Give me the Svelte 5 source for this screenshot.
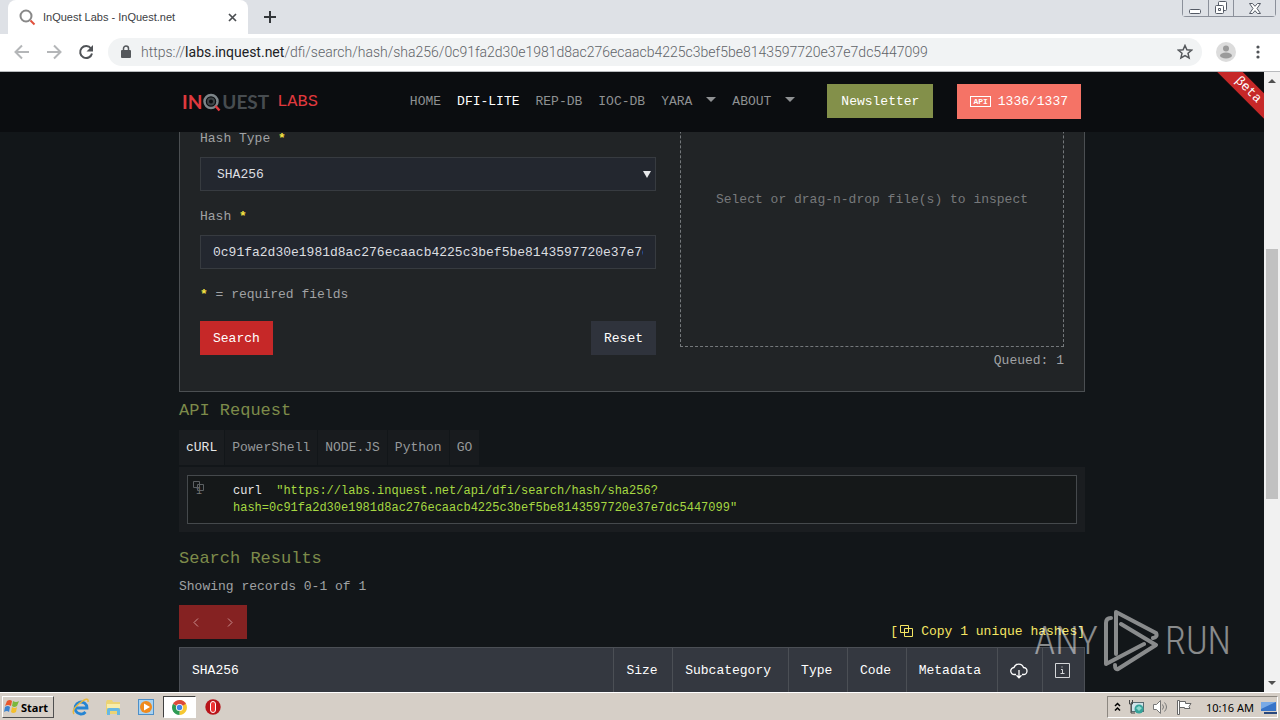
<script>
    const hash = "0c91fa2d30e1981d8ac276ecaacb4225c3bef5be8143597720e37e7dc5447099";

    const nav = [
        { name: "HOME" },
        { name: "DFI-LITE", active: true },
        { name: "REP-DB" },
        { name: "IOC-DB" },
        { name: "YARA", menu: true },
        { name: "ABOUT", menu: true },
    ];
    const languages = ["cURL", "PowerShell", "NODE.JS", "Python", "GO"];
    const columns = ["Size", "Subcategory", "Type", "Code", "Metadata"];

    let hashType = $state("SHA256");
    let hashValue = $state(hash);
    let language = $state("cURL");
</script>

<div class="screen">
    <div class="tabstrip">
        <div class="tab">
            <svg width="17" height="17" viewBox="0 0 17 17" fill="none">
                <circle cx="7" cy="7" r="5.5" stroke="#888" stroke-width="2" />
                <path d="M11.5 11.5l4 4" stroke="#e0503c" stroke-width="2" />
            </svg>
            <span class="tab-title">InQuest Labs - InQuest.net</span>
            <button class="plain" aria-label="Close tab">
                <svg width="9" height="9" viewBox="0 0 9 9"><path d="M1 1l7 7M8 1l-7 7" stroke="#4b4e52" stroke-width="1.7" /></svg>
            </button>
        </div>
        <button class="plain new-tab" aria-label="New tab">
            <svg width="12" height="12" viewBox="0 0 12 12"><path d="M6 0v12M0 6h12" stroke="#33363a" stroke-width="2" /></svg>
        </button>
        <div class="window-buttons">
            <button aria-label="Minimize"><svg width="13" height="12" viewBox="0 0 13 12"><rect x=".5" y="7.5" width="11" height="4" rx="1" fill="#fff" stroke="#555b66" /></svg></button>
            <button aria-label="Restore">
                <svg width="14" height="14" viewBox="0 0 14 14" fill="#fff" stroke="#555b66"><rect x="4.5" y=".5" width="8" height="9" rx="1" /><rect x="1.5" y="4.5" width="8" height="8" rx="1" /><path d="M4.5 7.5h2v2h-2z" /></svg>
            </button>
            <button aria-label="Close"><svg width="12" height="11" viewBox="0 0 12 11"><path d="M.5.5h3L6 3.3 8.5.5h3L8 5.5l3.5 5h-3L6 7.7l-2.5 2.8h-3L4 5.5z" fill="#fff" stroke="#555b66" /></svg></button>
        </div>
    </div>

    <div class="toolbar">
        <button class="plain" aria-label="Back">
            <svg width="16" height="16" viewBox="0 0 16 16" fill="none" stroke="#b4b6b8" stroke-width="2"><path d="M15 8H2M8 1.5L1.5 8 8 14.5" /></svg>
        </button>
        <button class="plain" aria-label="Forward">
            <svg width="16" height="16" viewBox="0 0 16 16" fill="none" stroke="#b4b6b8" stroke-width="2"><path d="M1 8h13M8 1.5L14.5 8 8 14.5" /></svg>
        </button>
        <button class="plain" aria-label="Reload">
            <svg width="16" height="16" viewBox="0 0 16 16"><path d="M13 4.5A6 6 0 1 0 14 9.5" fill="none" stroke="#505357" stroke-width="2" /><path d="M15 1v6.5H8.5z" fill="#505357" /></svg>
        </button>
        <div class="address">
            <svg width="10" height="13" viewBox="0 0 10 13"><rect y="5" width="10" height="8" rx="1" fill="#55585c" /><path d="M2.5 5V3.5a2.5 2.5 0 0 1 5 0V5" fill="none" stroke="#55585c" stroke-width="1.5" /></svg>
            <span class="url">https://<b>labs.inquest.net</b>/dfi/search/hash/sha256/{hash}</span>
            <button class="plain" aria-label="Bookmark">
                <svg width="16" height="16" viewBox="0 0 16 16"><path d="M8 1.5l1.9 4.3 4.7.4-3.6 3.1 1.1 4.6L8 11.5l-4.1 2.4L5 9.3 1.4 6.2l4.7-.4z" fill="none" stroke="#55585c" stroke-width="1.5" /></svg>
            </button>
        </div>
        <button class="plain avatar" aria-label="Profile">
            <svg width="20" height="20" viewBox="0 0 20 20"><circle cx="10" cy="10" r="10" fill="#dcdcdc" /><circle cx="10" cy="6.5" r="3" fill="#9b9b9b" /><ellipse cx="10" cy="13.5" rx="6" ry="3" fill="#9b9b9b" /></svg>
        </button>
        <button class="plain" aria-label="Menu">
            <svg width="4" height="14" viewBox="0 0 4 14" fill="#505357"><circle cx="2" cy="2" r="1.6" /><circle cx="2" cy="7" r="1.6" /><circle cx="2" cy="12" r="1.6" /></svg>
        </button>
    </div>

    <div class="viewport">
        <div class="page">
            <header>
                <div class="container bar">
                    <a class="logo" href="/" aria-label="InQuest Labs">
                        <span class="red">IN</span><svg width="20" height="19" viewBox="0 0 20 19" fill="none"><circle cx="9" cy="8.5" r="6.5" stroke="#7d8589" stroke-width="2.5" /><circle cx="9" cy="8.5" r="3" stroke="#3d4346" stroke-width="2" /><path d="M13.5 13l4 4.5" stroke="#e0393e" stroke-width="2.5" /></svg><span class="gray">UEST</span><span class="red labs">LABS</span>
                    </a>
                    <nav>
                        {#each nav as item}
                            <a href="/" class:active={item.active}>{item.name}{#if item.menu}<i></i>{/if}</a>
                        {/each}
                    </nav>
                    <button class="newsletter">Newsletter</button>
                    <button class="quota"><span>API</span>1336/1337</button>
                </div>
                <div class="ribbon">βeta</div>
            </header>

            <main class="container">
                <section class="card">
                    <form onsubmit={(e) => e.preventDefault()}>
                        <label for="hash-type">Hash Type <b>*</b></label>
                        <div class="select">
                            <select id="hash-type" bind:value={hashType}>
                                <option>SHA256</option>
                                <option>SHA1</option>
                                <option>MD5</option>
                            </select>
                        </div>
                        <label for="hash">Hash <b>*</b></label>
                        <input id="hash" type="text" bind:value={hashValue} />
                        <p><b>*</b> = required fields</p>
                        <div class="actions">
                            <button class="search">Search</button>
                            <button class="reset" type="reset">Reset</button>
                        </div>
                    </form>
                    <div class="upload">
                        <div class="dropzone">Select or drag-n-drop file(s) to inspect</div>
                        <p>Queued: 1</p>
                    </div>
                </section>

                <h2>API Request</h2>
                <div class="languages">
                    {#each languages as name}
                        <button class:active={language == name} onclick={() => (language = name)}>{name}</button>
                    {/each}
                </div>
                <div class="snippet">
                    <div class="code">
                        <span class="line-no">1</span>
                        <svg class="copy" width="11" height="11" viewBox="0 0 11 11" fill="none" stroke="#5c6063"><path d="M.5.5h6v6h-6zM4.5 3.5h6v6h-6z" /></svg>
                        <code><em>curl</em>{"  "}"https://labs.inquest.net/api/dfi/search/hash/sha256?<br />hash={hash}"</code>
                    </div>
                </div>

                <h2 class="results-title">Search Results</h2>
                <p class="showing">Showing records 0-1 of 1</p>
                <div class="results-bar">
                    <div class="pager">
                        <button aria-label="Previous"><svg width="6" height="9" viewBox="0 0 6 9"><path d="M5 .5l-4 4 4 4" /></svg></button>
                        <button aria-label="Next"><svg width="6" height="9" viewBox="0 0 6 9"><path d="M1 .5l4 4-4 4" /></svg></button>
                    </div>
                    <a class="copy-all" href="/">[<svg width="13" height="12" viewBox="0 0 13 12" fill="none" stroke="#f5e663"><path d="M.5.5h8v7h-8zM4.5 3.5h8v8h-8z" /></svg>Copy 1 unique hashes]</a>
                </div>
                <table>
                    <thead>
                        <tr>
                            <th class="wide">SHA256</th>
                            {#each columns as column}
                                <th>{column}</th>
                            {/each}
                            <th aria-label="Download">
                                <svg width="18" height="16" viewBox="0 0 18 16" fill="none" stroke="#fff" stroke-width="1.3"><path d="M6 11.5H4.5a3.5 3.5 0 0 1-.5-7 5 5 0 0 1 9.5 0 3.5 3.5 0 0 1 0 7H12M9 7v7.5M6.5 12.3L9 14.8l2.5-2.5" /></svg>
                            </th>
                            <th aria-label="Info">
                                <svg width="15" height="15" viewBox="0 0 15 15" fill="none" stroke="#d4d6d9"><path d="M.5.5h14v14h-14zM6 6.5h1.5v4M5.5 10.5h4M7 3.5v1" /></svg>
                            </th>
                        </tr>
                    </thead>
                </table>
            </main>
        </div>
        <div class="scrollbar">
            <i class="up"></i>
            <div class="thumb"></div>
            <i class="down"></i>
        </div>
        <div class="watermark">
            <span>ANY</span>
            <svg width="55" height="62" viewBox="0 0 55 62" fill="none" stroke="#fff" stroke-width="4" stroke-linejoin="round" stroke-linecap="round"><path d="M7 8Q2 8 2 13V54L40 34M12 44V2L52 23Q54 27 49 28M17 14L52 35 14 59Q11 60 11 55" /></svg>
            <span>RUN</span>
        </div>
    </div>

    <footer class="taskbar">
        <button class="start">
            <svg width="16" height="16" viewBox="0 0 16 16"><path d="M3 2q3-2 5 0L7 7Q4 5 1 7z" fill="#e8582c" /><path d="M9 2q3 2 6 0l-2 5q-3 2-5 0z" fill="#7cb83c" /><path d="M1 8q3-2 5 0l-1 5q-2-2-5 0z" fill="#3c83cf" /><path d="M8 8q3 2 5 0l-1 5q-3 2-5 0z" fill="#f4bf2c" /></svg>Start
        </button>
        <button class="task" aria-label="Internet Explorer">
            <svg width="18" height="18" viewBox="0 0 18 18" fill="none"><path d="M4 10h11A6 6 0 1 0 13.5 14" stroke="#2585d3" stroke-width="2.8" /><path d="M2 16Q-1 12 8 5t8-1" stroke="#e9b93c" stroke-width="1.5" /></svg>
        </button>
        <button class="task" aria-label="Explorer">
            <svg width="17" height="17" viewBox="0 0 17 17"><path d="M1 3l1-2h5l1 2h7v12H1z" fill="#ecd374" /><path d="M2 5h13v4H2z" fill="#f8edaa" /><path d="M2 16v-5q0-2 2-2h9q2 0 2 2v5h-3v-4H5v4z" fill="#67b8e3" /></svg>
        </button>
        <button class="task" aria-label="Media Player">
            <svg width="17" height="17" viewBox="0 0 17 17"><rect x=".5" y=".5" width="15" height="15" fill="#a9d2f0" stroke="#4d8fc8" /><circle cx="8" cy="8" r="6" fill="#f08a1c" /><path d="M6 4.5l6 3.5-6 3.5z" fill="#fff" /></svg>
        </button>
        <button class="task open" aria-label="Chrome">
            <svg width="15" height="15" viewBox="0 0 16 16"><path d="M8 8V0a8 8 0 0 1 6.9 4A8 8 0 0 1 8 16z" fill="#f6c833" /><path d="M8 8v8A8 8 0 0 1 1.1 4z" fill="#2e9b54" /><path d="M8 8L1.1 4A8 8 0 0 1 14.9 4z" fill="#dd4a3c" /><circle cx="8" cy="8" r="3.8" fill="#fff" /><circle cx="8" cy="8" r="2.9" fill="#4285e8" /></svg>
        </button>
        <button class="task" aria-label="Opera">
            <svg width="16" height="16" viewBox="0 0 16 16"><circle cx="8" cy="8" r="7.7" fill="#b8141a" /><rect x="5.5" y="2.5" width="5" height="11" rx="2.5" fill="#e33" stroke="#fff" /></svg>
        </button>
        <div class="tray">
            <svg width="7" height="10" viewBox="0 0 7 10" fill="none" stroke="#000" stroke-width="1.5"><path d="M1 4l2.5-2.5L6 4M1 8.5L3.5 6 6 8.5" /></svg>
            <svg width="17" height="16" viewBox="0 0 17 16"><rect x="3.5" y="3.5" width="12" height="9" fill="#cfe4ea" stroke="#5a6c72" /><path d="M1.5 1v4h3V1M3 5v9h4" fill="none" stroke="#444" /><circle cx="11" cy="10" r="4.5" fill="#36a39a" /><path d="M8 9l3-2 3 2-3 3z" fill="#8ed8ce" /></svg>
            <svg width="17" height="14" viewBox="0 0 17 14" fill="none" stroke="#777"><path d="M1.5 4.5h3l4-4v13l-4-4h-3z" fill="#fff" /><path d="M10.5 4.5q2 2.5 0 5M12.5 2.5q4 4.5 0 9" /></svg>
            <svg width="17" height="15" viewBox="0 0 17 15" fill="#fff" stroke="#666"><path d="M1.5.5h2v14h-2zM3.5 1.5h6v2h5.5l-2 3 1 2H8.5v-1h-5z" /></svg>
            <time>10:16 AM</time>
            <svg width="16" height="13" viewBox="0 0 16 13"><path d="M0 1h15v9H0z" fill="#3774c8" /><path d="M0 1h15L0 8z" fill="#79aae6" /><path d="M3 11h13v2H3z" fill="#27477c" /></svg>
        </div>
    </footer>
</div>

<style>
    :global(body) {
        margin: 0;
    }

    .screen {
        display: flex;
        flex-direction: column;
        height: 100vh;
        overflow: hidden;
        font-family: "Liberation Mono", monospace;
        font-size: 13px;
        color: #a0a2a4;
    }

    .screen * {
        box-sizing: border-box;
    }

    button {
        font: inherit;
        border: 0;
        padding: 0;
        border-radius: 0;
    }

    svg {
        display: block;
        flex: none;
    }

    a {
        color: inherit;
        text-decoration: none;
    }

    p,
    h2 {
        margin: 0;
        font-weight: 400;
    }

    .plain {
        background: none;
    }

    /* browser */
    .tabstrip {
        display: flex;
        flex: none;
        height: 34px;
        background: #dee1e6;
        padding-left: 8px;
    }

    .tab {
        display: flex;
        align-items: center;
        gap: 7px;
        width: 240px;
        padding: 0 11px;
        background: #fff;
        border-radius: 8px 8px 0 0;
        font: 11px "Liberation Sans", sans-serif;
        color: #3c4043;
    }

    .tab-title {
        flex: 1;
        white-space: nowrap;
    }

    .new-tab {
        margin-left: 16px;
    }

    .window-buttons {
        display: flex;
        height: 17px;
        margin: 0 4px 0 auto;
        border: 1px solid #8b909a;
        border-top: 0;
        border-radius: 0 0 4px 4px;
    }

    .window-buttons button {
        display: flex;
        align-items: center;
        justify-content: center;
        width: 25px;
        background: #dee1e6;
    }

    .window-buttons button + button {
        border-left: 1px solid #8b909a;
    }

    .window-buttons button:last-child {
        width: 42px;
    }

    .toolbar {
        display: flex;
        flex: none;
        align-items: center;
        gap: 16px;
        height: 38px;
        padding: 0 20px 2px 14px;
        background: #fff;
        border-bottom: 1px solid #b8babd;
    }

    .address {
        display: flex;
        flex: 1;
        align-items: center;
        gap: 10px;
        height: 28px;
        margin: 0 -2px;
        padding: 0 9px 0 13px;
        border-radius: 14px;
        background: #f1f3f4;
    }

    .url {
        flex: 1;
        font: 300 14px Roboto, sans-serif;
        color: #5f6368;
        white-space: nowrap;
    }

    .url b {
        font-weight: 400;
        color: #202124;
    }

    .avatar {
        margin-right: 4px;
    }

    .viewport {
        display: flex;
        flex: 1;
        min-height: 0;
        position: relative;
    }

    .page {
        flex: 1;
        min-width: 0;
        overflow: hidden;
        background: #121619;
    }

    .container {
        width: 906px;
        max-width: 100%;
        margin: 0 auto;
    }

    /* site header */
    header {
        position: relative;
        z-index: 1;
        overflow: hidden;
        background: #0b0d10;
    }

    .bar {
        display: flex;
        align-items: center;
        height: 60px;
        padding: 0 4px 2px 3px;
    }

    .logo {
        display: flex;
        align-items: center;
        font: 700 19px Lato, sans-serif;
    }

    .logo svg {
        margin-top: 3px;
    }

    .red {
        color: #e0393e;
    }

    .gray {
        color: #474c50;
    }

    .labs {
        margin-left: 8px;
        font-family: "Liberation Mono", monospace;
        font-size: 17px;
        font-weight: 400;
    }

    nav {
        display: flex;
        gap: 16px;
        margin-left: auto;
    }

    nav a {
        color: #8f9193;
    }

    nav a.active {
        color: #fff;
    }

    nav i {
        display: inline-block;
        margin-left: 14px;
        border: 5px solid transparent;
        border-top-color: #8f9193;
        border-bottom: 0;
        vertical-align: 3px;
    }

    .newsletter {
        height: 34px;
        margin-left: 32px;
        padding: 0 14px;
        background: #83904a;
        color: #fff;
    }

    .quota {
        display: flex;
        align-items: center;
        gap: 7px;
        height: 35px;
        margin-left: 24px;
        padding: 0 13px;
        background: #f57366;
        color: #fff;
    }

    .quota span {
        padding: 0 2px;
        border: 1px solid #fff;
        font-size: 8px;
        font-weight: 700;
        line-height: 9px;
    }

    .ribbon {
        position: absolute;
        top: 9px;
        right: -39px;
        width: 110px;
        background: #c62828;
        color: #fff;
        line-height: 18px;
        text-align: center;
        transform: rotate(45deg);
    }

    /* search form */
    .card {
        display: grid;
        grid-template-columns: 456fr 384fr;
        gap: 24px;
        padding: 0 20px 22px;
        border: 1px solid #4b4f52;
        border-top: 0;
        background: #212426;
    }

    form {
        display: flex;
        flex-direction: column;
        min-width: 0;
    }

    label,
    form p {
        line-height: 14px;
    }

    label b,
    form b {
        color: #f5e342;
    }

    select,
    input {
        display: block;
        width: 100%;
        height: 34px;
        margin: 11px 0 19px;
        padding: 0 12px;
        border: 1px solid #373b40;
        border-radius: 0;
        background: #23272f;
        color: #dcdee0;
        font: inherit;
        appearance: none;
    }

    select {
        padding: 0 16px;
    }

    .select {
        position: relative;
    }

    .select::after {
        content: "";
        position: absolute;
        right: 5px;
        top: 25px;
        border: 4px solid transparent;
        border-top: 7px solid #e6e8ea;
        border-bottom: 0;
    }

    .actions {
        display: flex;
        justify-content: space-between;
        margin-top: 19px;
    }

    .actions button {
        height: 34px;
        padding: 0 13px;
        color: #fff;
    }

    .actions .search {
        background: #c62828;
    }

    .actions .reset {
        background: #2f333c;
    }

    /* the top of the drop zone is scrolled under the header */
    .dropzone {
        display: flex;
        align-items: center;
        justify-content: center;
        height: 296px;
        margin-top: -81px;
        border: 1px dashed #74787b;
        color: #77797b;
    }

    .upload p {
        margin-top: 6px;
        text-align: right;
        line-height: 16px;
    }

    /* api request */
    h2 {
        margin: 7px 0;
        color: #7d8b4a;
        font-size: 17px;
        line-height: 24px;
    }

    .languages {
        display: flex;
        gap: 1px;
    }

    .languages button {
        height: 35px;
        padding: 0 7px;
        background: #181b1e;
        color: #96999b;
    }

    .languages button.active {
        background: #1a1d20;
        color: #e4e5e6;
    }

    .snippet {
        margin-top: 2px;
        padding: 8px;
        background: #1a1d20;
    }

    .code {
        position: relative;
        display: flex;
        padding: 7px 8px 6px;
        border: 1px solid #45494c;
        background: #151819;
        font-size: 12px;
        line-height: 17px;
    }

    .line-no {
        width: 37px;
        font-size: 10px;
        color: #777;
    }

    .copy {
        position: absolute;
        left: 5px;
        top: 5px;
    }

    code {
        font: inherit;
        color: #a6d842;
        white-space: pre;
    }

    em {
        font-style: normal;
        color: #e6e6e6;
    }

    .results-title {
        margin: 15px 0 4px;
    }

    .showing {
        line-height: 24px;
    }

    .results-bar {
        display: flex;
        align-items: flex-end;
        justify-content: space-between;
        margin: 6px 0 8px;
    }

    .pager {
        display: flex;
    }

    .pager button {
        display: flex;
        align-items: center;
        justify-content: center;
        width: 34px;
        height: 34px;
        background: #852222;
    }

    .pager path {
        fill: none;
        stroke: #c98f8f;
    }

    .copy-all {
        display: flex;
        color: #f5e663;
        line-height: 14px;
    }

    .copy-all svg {
        margin: 0 8px 0 2px;
    }

    table {
        width: 100%;
        border-collapse: collapse;
        background: #343840;
        color: #fff;
    }

    th {
        height: 46px;
        padding: 0 12px;
        border: 1px solid #4b4f55;
        font-weight: 400;
        text-align: left;
    }

    th.wide {
        width: 48%;
    }

    /* scrollbar */
    .scrollbar {
        display: flex;
        flex-direction: column;
        align-items: center;
        width: 16px;
        padding: 7px 0;
        background: #f1f1f1;
    }

    .scrollbar i {
        border: 4px solid transparent;
    }

    .scrollbar .up {
        border-top: 0;
        border-bottom-color: #505050;
    }

    .scrollbar .down {
        margin-top: auto;
        border-bottom: 0;
        border-top-color: #505050;
    }

    .thumb {
        width: 12px;
        height: 250px;
        margin-top: 166px;
        background: #c1c1c1;
    }

    .watermark {
        position: absolute;
        right: 49px;
        bottom: 20px;
        display: flex;
        align-items: center;
        gap: 6px;
        opacity: 0.5;
        color: #fff;
        font: 300 38px/62px "Roboto Condensed", "Open Sans Condensed", "Liberation Sans", sans-serif;
        pointer-events: none;
    }

    /* taskbar */
    .taskbar {
        display: flex;
        flex: none;
        align-items: center;
        height: 28px;
        padding: 1px 2px 0;
        border-top: 1px solid #fff;
        background: #d6cfc7;
        color: #000;
        font: 11px "Noto Sans", sans-serif;
    }

    .start {
        display: flex;
        align-items: center;
        gap: 1px;
        height: 22px;
        width: 52px;
        margin-right: 10px;
        padding-left: 1px;
        border: 1px solid;
        border-color: #fff #505050 #505050 #fff;
        background: #d6cfc7;
        font-weight: 700;
    }

    .task {
        display: flex;
        align-items: center;
        justify-content: center;
        width: 33px;
        height: 22px;
        background: none;
    }

    .task.open {
        border: 1px solid;
        border-color: #404040 #fff #fff #404040;
        background: #fff;
    }

    .tray {
        display: flex;
        align-items: center;
        gap: 7px;
        height: 22px;
        margin-left: auto;
        padding: 0 0 0 6px;
        border: 1px solid;
        border-color: #8c8780 #fff #fff #8c8780;
    }

    time {
        margin-left: 6px;
    }
</style>
